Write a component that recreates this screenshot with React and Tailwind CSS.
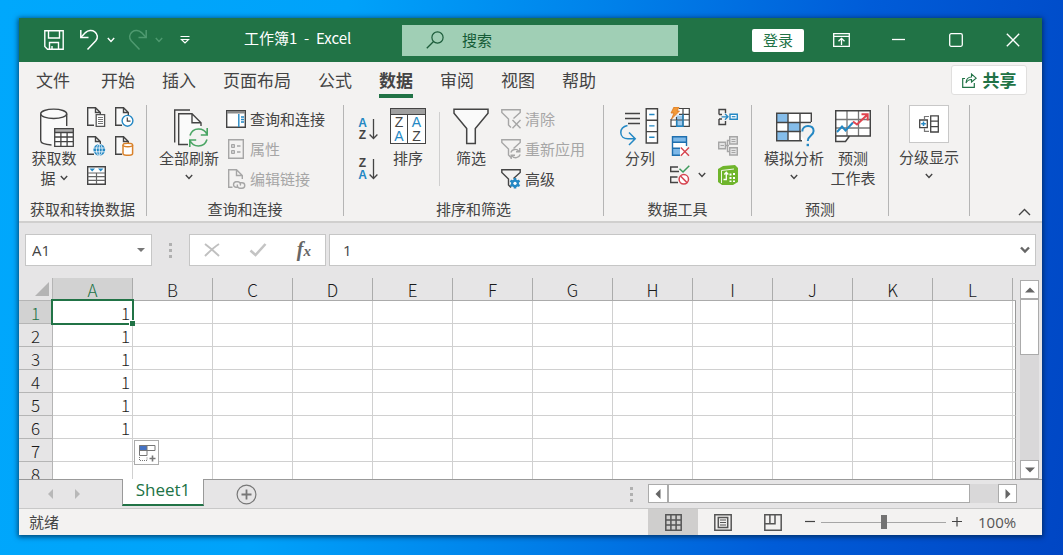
import { useState } from "react"

const tabs = ["文件", "开始", "插入", "页面布局", "公式", "数据", "审阅", "视图", "帮助"]
const columns = ["A", "B", "C", "D", "E", "F", "G", "H", "I", "J", "K", "L"]
const rows = [1, 2, 3, 4, 5, 6, 7, 8]
const initialCells = { A1: 1, A2: 1, A3: 1, A4: 1, A5: 1, A6: 1 }

const DARK = "#444"
const BLUE = "#2488c4"
const GRAY = "#a6a6a6"

const Svg = ({ w, h, children, className = "" }) => (
    <svg width={w} height={h} viewBox={`0 0 ${w} ${h}`} fill="none" className={`shrink-0 ${className}`} aria-hidden="true">
        {children}
    </svg>
)

const Chevron = ({ color = DARK, className }) => (
    <Svg w={8} h={6} className={className}>
        <path d="M.8 1L4 4.4L7.2 1" stroke={color} strokeWidth="1.4" />
    </Svg>
)

/* ---------- title bar icons ---------- */

const SaveIcon = () => (
    <Svg w={20} h={20}>
        <path d="M.8 .8H19.2V19.2H3.5L.8 16.5Z" stroke="#fff" strokeWidth="1.4" />
        <path d="M4.5 1V8H15.5V1M5.5 19V12.5H14.5V19M8 19V16" stroke="#fff" strokeWidth="1.4" />
    </Svg>
)

const UndoIcon = ({ color = "#fff", flip }) => (
    <Svg w={19} h={22} className={flip ? "-scale-x-100" : ""}>
        <path d="M.8 1V8.5H8.5" stroke={color} strokeWidth="1.5" />
        <path d="M1 8.2L5.5 3.6C8 1.2 12 .8 14.8 2.8C17.8 5 18.2 9 15.8 11.8L7.5 20.5" stroke={color} strokeWidth="1.5" />
    </Svg>
)

const CustomizeIcon = () => (
    <Svg w={10} h={10}>
        <path d="M.5 1.5H9.5M1.5 4.5L5 8L8.5 4.5Z" stroke="#fff" strokeWidth="1.2" />
    </Svg>
)

const SearchIcon = () => (
    <Svg w={18} h={18}>
        <circle cx="11.5" cy="6.5" r="5.6" stroke="#1c5c3a" strokeWidth="1.2" />
        <path d="M7.5 10.5L.8 17.2" stroke="#1c5c3a" strokeWidth="1.3" />
    </Svg>
)

const RibbonModeIcon = () => (
    <Svg w={17} h={14}>
        <path d="M.7 .7H16.3V13.3H.7ZM.7 3.4H16.3" stroke="#fff" strokeWidth="1.3" />
        <path d="M8.5 12V5.5M5.5 8.3L8.5 5.3L11.5 8.3" stroke="#fff" strokeWidth="1.3" />
    </Svg>
)

const ShareIcon = () => (
    <Svg w={15} h={15}>
        <path d="M3 5.5H.7V14.3H12.3V10" stroke="#217346" strokeWidth="1.2" />
        <path d="M4 10C4.2 6.5 6 4 9.5 4V1L14.2 5.2L9.5 9V6.5C7 6.5 5.2 7.6 4 10Z" stroke="#217346" strokeWidth="1.1" />
    </Svg>
)

/* ---------- ribbon icons ---------- */

const DatabaseIcon = () => (
    <Svg w={36} h={40}>
        <path d="M1.7 5.8V32.5C1.7 35 7 37 14 37H15V20H27.7V5.8" fill="#fafafa" />
        <path d="M1.7 5.8V32.5C1.7 34.8 6 36.6 12.5 37M27.7 5.8V18" stroke={DARK} strokeWidth="1.4" />
        <ellipse cx="14.7" cy="5.8" rx="13" ry="4.7" fill="#fafafa" stroke={DARK} strokeWidth="1.4" />
        <path d="M15.7 20.7H34.3V38.3H15.7Z" fill="#fff" />
        <path d="M15 20H35V24.5H15Z" fill="#b0b0b0" />
        <path d="M15.7 20.7H34.3V38.3H15.7ZM15.7 24.5H34.3M15.7 29H34.3M15.7 33.6H34.3M21.9 24.5V38M28.1 24.5V38" stroke={DARK} strokeWidth="1.3" />
    </Svg>
)

const Page = ({ color = DARK }) => (
    <>
        <path d="M.7 .7H8.5L13.3 5.5V18.3H.7Z" fill="#fafafa" />
        <path d="M7 18.3H.7V.7H8.5L13.3 5.5V8M8.5 .7V5.5H13.3" stroke={color} strokeWidth="1.4" />
    </>
)

const FromTextIcon = () => (
    <Svg w={19} h={20}>
        <Page />
        <path d="M9.2 7.7H17.6V19.3H9.2Z" fill="#fff" stroke="#555" strokeWidth="1.3" />
        <path d="M11 10.5H16M11 12.5H16M11 14.5H16M11 16.5H16" stroke="#777" />
    </Svg>
)

const RecentIcon = () => (
    <Svg w={19} h={20}>
        <Page />
        <circle cx="12.5" cy="13.8" r="5.4" fill="#fff" stroke={BLUE} strokeWidth="1.4" />
        <path d="M12.3 10.5V14.2H15.5" stroke={DARK} strokeWidth="1.2" />
    </Svg>
)

const WebIcon = () => (
    <Svg w={19} h={20}>
        <Page />
        <circle cx="12.3" cy="13.8" r="5.9" fill={BLUE} />
        <path d="M6.5 12H18M6.5 15.8H18M12.3 8V19.6" stroke="#fff" strokeWidth=".8" />
        <ellipse cx="12.3" cy="13.8" rx="2.9" ry="5.7" stroke="#fff" strokeWidth=".8" />
    </Svg>
)

const SourceIcon = () => (
    <Svg w={19} h={20}>
        <Page />
        <path d="M8 9V17.5C8 18.6 10 19.3 12.8 19.3C15.6 19.3 17.6 18.6 17.6 17.5V9" fill="#fff" stroke="#d9822b" strokeWidth="1.5" />
        <ellipse cx="12.8" cy="9" rx="4.8" ry="1.7" fill="#fff" stroke="#d9822b" strokeWidth="1.5" />
    </Svg>
)

const FromTableIcon = () => (
    <Svg w={19} h={19}>
        <path d="M.7 .7H18.3V18.3H.7Z" fill="#fff" stroke={DARK} strokeWidth="1.4" />
        <path d="M2.5 2.5H8L5.2 5.5ZM11 2.5H16.5L13.7 5.5Z" fill={BLUE} />
        <path d="M.7 7H18.3M.7 10.7H18.3M.7 14.4H18.3M9.5 7V18" stroke="#666" strokeWidth="1.2" />
    </Svg>
)

const RefreshAllIcon = () => (
    <Svg w={36} h={40}>
        <path d="M1.7 34.5V2H17" stroke={DARK} strokeWidth="1.4" />
        <path d="M5.7 5.7H19L28 14.7V20L16 36.5H5.7Z" fill="#fafafa" />
        <path d="M15 36.5H5.7V5.7H19L28 14.7V18M19 5.7V14.7H28" stroke={DARK} strokeWidth="1.4" />
        <circle cx="25.5" cy="29.5" r="10" fill="#f3f2f1" />
        <path d="M17 27.5C18.3 23.5 21.5 21 25.5 21C29.5 21 32.5 23 34 26.5M34.2 20V27H27.8M34 31.5C32.7 35.5 29.5 38 25.5 38C21.5 38 18.5 36 17 32.5M16.8 39V32H23.2" stroke="#4aa564" strokeWidth="1.6" />
    </Svg>
)

const QueriesIcon = () => (
    <Svg w={20} h={18}>
        <path d="M.7 .7H19.3V17.3H.7Z" fill="#fff" stroke={DARK} strokeWidth="1.4" />
        <path d="M1 1H19V3.5H1Z" fill="#8a8a8a" />
        <path d="M12.8 4V17" stroke={BLUE} strokeWidth="1.4" />
        <path d="M15 7H18M15 9.5H18M15 12H18" stroke={BLUE} strokeWidth="1.3" />
    </Svg>
)

const PropertiesIcon = () => (
    <Svg w={20} h={20}>
        <path d="M2.7 .7H17.3V19.3H2.7Z" stroke={GRAY} strokeWidth="1.4" />
        <path d="M5.5 5.5H8.5V8.5H5.5ZM5.5 11.5H8.5V14.5H5.5Z" fill="#ccc" stroke={GRAY} />
        <path d="M11 7H14.5M11 13H14.5" stroke={GRAY} strokeWidth="1.6" />
    </Svg>
)

const EditLinksIcon = () => (
    <Svg w={20} h={20}>
        <path d="M6.5 18.3H2.7V.7H10.5L16.3 6.5V10M10.5 .7V6.5H16.3" stroke={GRAY} strokeWidth="1.4" />
        <path d="M11.5 18.2H9.8A2.8 2.8 0 0 1 9.8 12.7H12A2.8 2.8 0 0 1 14.3 16.5M13.6 13.7H16A2.7 2.7 0 0 1 16 19.2H13.8A2.7 2.7 0 0 1 11.5 15.5" stroke={GRAY} strokeWidth="1.4" />
    </Svg>
)

const SortAzIcon = ({ first, second }) => (
    <span className="flex items-center gap-[2px] font-['Liberation_Sans',sans-serif] text-[12px] leading-3 font-bold text-[#444]">
        <span className="flex w-[9px] flex-col items-center">
            <span className={first === "A" ? "text-[#2488c4]" : ""}>{first}</span>
            <span className={second === "A" ? "text-[#2488c4]" : ""}>{second}</span>
        </span>
        <Svg w={9} h={22}>
            <path d="M4.5 1V20.5M.6 16.5L4.5 20.5L8.4 16.5" stroke={DARK} strokeWidth="1.3" />
        </Svg>
    </span>
)

const SortIcon = () => (
    <span className="flex size-9 flex-col border border-[#444] bg-white">
        <span className="h-[6px] border-b border-[#444] bg-[#a0a0a0]" />
        <span className="grid flex-1 grid-cols-2 text-center font-['Liberation_Sans',sans-serif] text-[14px] leading-[14px]">
            <span className="border-r border-[#444]">Z</span>
            <span className="text-[#2488c4]">A</span>
            <span className="border-r border-[#444] text-[#2488c4]">A</span>
            <span>Z</span>
        </span>
    </span>
)

const FilterIcon = () => (
    <Svg w={36} h={37}>
        <path d="M1 1.2H35V5.2L22.3 20.5V35.5H13.7V20.5L1 5.2Z" fill="#fafafa" stroke={DARK} strokeWidth="1.5" />
    </Svg>
)

const SmallFunnel = ({ color, children }) => (
    <Svg w={20} h={20}>
        <path d="M10 18.5L7.5 16V10L.8 3.5V.7H19.2V3.5L12.5 9.5" stroke={color} strokeWidth="1.4" />
        {children}
    </Svg>
)

const ClearIcon = () => (
    <SmallFunnel color={GRAY}>
        <path d="M11.5 11L19.5 19.3M19.5 11L11.5 19.3" stroke={GRAY} strokeWidth="1.4" />
    </SmallFunnel>
)

const ReapplyIcon = () => (
    <SmallFunnel color={GRAY}>
        <path d="M9.8 13.5A4.7 4.7 0 0 1 18 12.3M18.8 9V12.8H15M19.2 15.5A4.7 4.7 0 0 1 11 16.8M10.2 20V16.2H14" stroke={GRAY} strokeWidth="1.4" />
    </SmallFunnel>
)

const AdvancedIcon = () => (
    <SmallFunnel color={DARK}>
        <g stroke={BLUE} strokeWidth="2.6">
            <path d="M14 9V19.6M9.4 11.6L18.6 17M9.4 17L18.6 11.6" />
        </g>
        <circle cx="14" cy="14.3" r="3.9" fill={BLUE} />
        <circle cx="14" cy="14.3" r="1.6" fill="#fff" />
    </SmallFunnel>
)

const SplitIcon = () => (
    <Svg w={40} h={38}>
        <path d="M5 5.5H20M5 10.5H20M8 15.5H20" stroke={DARK} strokeWidth="1.3" />
        <path d="M7.5 17.5C3 18.5 .8 21 .8 24.5C.8 28.5 4 30.8 8 30.8H14.5M9 24.5L15.2 30.8L9 37" stroke={BLUE} strokeWidth="1.5" />
        <path d="M26.2 .8H37.5V35H26.2ZM26.2 12.2H37.5M26.2 23.6H37.5" fill="#fff" stroke={DARK} strokeWidth="1.4" />
        <path d="M29.2 6.5H34.5M29.2 17.9H34.5M29.2 29.3H34.5" stroke={BLUE} strokeWidth="1.4" />
    </Svg>
)

const FlashFillIcon = () => (
    <Svg w={20} h={20}>
        <path d="M9 1.5H19.3V19.3H1V12H9Z" fill="#fff" />
        <path d="M6.5 8.5H13V19H6.5Z" fill="#9cc9ec" />
        <path d="M9 1.5H19.3V19.3H1V12M1 13H19M6.5 10V19M13 2V19M9 7.3H19" stroke={DARK} strokeWidth="1.2" />
        <path d="M13 7.3V19.2H6.8V13" stroke={BLUE} strokeWidth="1.4" />
        <path d="M4 0H9L7 4H9.5L1.5 12L4 6H1Z" fill="#f29a38" stroke="#d9731a" strokeWidth=".8" />
    </Svg>
)

const RemoveDupIcon = () => (
    <Svg w={20} h={21}>
        <path d="M2.5 .7H16.5V19.3H2.5Z" fill="#fff" />
        <path d="M2.5 .7H16.5V6H2.5ZM2.5 12.5H10V19.3H2.5Z" fill="#7db8e8" />
        <path d="M10 19.3H2.5V.7H16.5V10M2.5 6.2H16.5M2.5 12.3H10" stroke="#1f6fae" strokeWidth="1.4" />
        <path d="M10.8 11.5L19 19.7M19 11.5L10.8 19.7" stroke="#d64550" strokeWidth="1.4" />
    </Svg>
)

const ValidationIcon = () => (
    <Svg w={20} h={20}>
        <path d="M8 2H.7V6.5H9M7.5 12H.7V17.5H8" stroke={DARK} strokeWidth="1.4" />
        <path d="M9.5 3.8L13 7L19.3 .7" stroke="#3d9a5b" strokeWidth="1.5" />
        <circle cx="13.8" cy="14.3" r="4.7" fill="#fff" stroke="#d64550" strokeWidth="1.5" />
        <path d="M10.5 11L17 17.6" stroke="#d64550" strokeWidth="1.5" />
    </Svg>
)

const ConsolidateIcon = () => (
    <Svg w={20} h={18}>
        <path d="M7.5 5V1.5H1V6.5M1 11V16.5H7.5V13M1 6.5H4M1 11H4" stroke={DARK} strokeWidth="1.4" />
        <path d="M3.5 8.8H9.5M7 5.8L10 8.8L7 11.8" stroke={BLUE} strokeWidth="1.3" />
        <path d="M12 6.2H19.3V11.2H12Z" fill="#fff" stroke={BLUE} strokeWidth="1.4" />
        <path d="M13.8 8.7H17.5" stroke={BLUE} strokeWidth="1.2" />
    </Svg>
)

const RelationsIcon = () => (
    <Svg w={20} h={20}>
        <path d="M7.5 9.5H11M11 4.5H9.5V15.5H11" stroke={GRAY} strokeWidth="1.4" />
        <path d="M.7 6.2H7.5V12.8H.7ZM11.7 .7H19.3V8H11.7ZM11.7 11.7H19.3V19H11.7Z" fill="#e4e4e4" stroke={GRAY} strokeWidth="1.4" />
        <path d="M2.5 9.5H6M13.5 3.5H17.5M13.5 5.5H17.5M13.5 14.5H17.5M13.5 16.5H17.5" stroke={GRAY} />
    </Svg>
)

const DataModelIcon = () => (
    <Svg w={20} h={20}>
        <path d="M0 4L5 1L17 0L20 3V17L15 20H4L0 17Z" fill="#6fb52c" />
        <path d="M3.5 18V5.5L16 4" stroke="#fff" strokeWidth=".9" />
        <path d="M8.3 7.5V14.5H5.5M6.3 9.5L8.3 7.2L10.3 9.5" stroke="#fff" strokeWidth="1.3" />
        <path d="M11.5 8.5H13.5V10.5H11.5ZM15 8H17V10H15ZM11.5 12H13.5V14H11.5ZM15 12H17V14H15ZM11.5 15.5H13.5V17H11.5ZM15 15.5H17V17H15Z" fill="#fff" />
    </Svg>
)

const WhatIfIcon = () => (
    <Svg w={36} h={36} className="overflow-visible">
        <path d="M.7 1.2H35.3V28.8H.7Z" fill="#fff" />
        <path d="M.7 1.2H12V10.5H.7ZM.7 19.5H12V28.8H.7ZM12 10.5H24V19.5H12Z" fill="#85bdea" />
        <path d="M35.3 10V1.2H.7V28.8H26M.7 10.5H35M.7 19.5H26M12 1.2V28.8M24 1.2V28.8" stroke={DARK} strokeWidth="1.4" />
        <path d="M25 12H40V36H28V27L25 24Z" fill="#f3f2f1" />
        <path d="M26.3 19.5C26.3 16 28.8 14 32 14C35.4 14 37.6 16 37.6 19C37.6 23.5 31.8 23.5 31.8 29" stroke={BLUE} strokeWidth="2" />
        <path d="M30.6 31.8H33V34.2H30.6Z" fill={BLUE} />
    </Svg>
)

const ForecastIcon = () => (
    <Svg w={36} h={34}>
        <path d="M.7 .8H35.3V26H14.5L10.5 31.5H.7Z" fill="#fff" />
        <path d="M12 1V26M23.5 1V26M1 9.5H35M1 18H35" stroke="#777" strokeWidth="1.3" />
        <path d="M.7 .8H35.3V26H14.5L10.5 31.5H.7ZM.7 26H14.5" stroke={DARK} strokeWidth="1.5" />
        <path d="M2 22L7 16.5L10.5 20.5L18 12.5" stroke={BLUE} strokeWidth="2" />
        <path d="M18 11.5L22 14.5L32 5M26.5 4.3H32.7V10.5" stroke="#e0444f" strokeWidth="2" />
    </Svg>
)

const OutlineIcon = () => (
    <Svg w={20} h={18}>
        <path d="M11.7 .8H19.3V17H11.7ZM11.7 6.2H19.3M11.7 11.6H19.3" stroke={DARK} strokeWidth="1.3" />
        <path d="M10 1.5H5.5V4M5.5 13.5V16.3H10" stroke="#777" strokeWidth="1.2" />
        <path d="M.7 5H8.3V12.6H.7Z" fill="#fff" stroke={DARK} strokeWidth="1.3" />
        <path d="M4.5 6.5V11.1M2.2 8.8H6.8" stroke={BLUE} strokeWidth="1.5" />
    </Svg>
)

const AutoFillIcon = () => (
    <Svg w={18} h={18}>
        <path d="M1.5 1.5H9V6.5H1.5Z" fill="#4472c4" />
        <path d="M1.5 1.5H17V6.5H1.5ZM9 1.5V11.5H1.5V1.5" stroke="#777" />
        <path d="M1.5 13V16.5H9V13" stroke="#777" strokeDasharray="1 1" />
        <path d="M14.5 11.5V17.5M11.5 14.5H17.5" stroke="#777" strokeWidth="1.6" />
    </Svg>
)

/* ---------- ribbon building blocks ---------- */

const Group = ({ label, className, children }) => (
    <section className="flex h-[111px] shrink-0 flex-col justify-between border-r border-[#b5b5b5]">
        <div className={`flex items-start ${className}`}>{children}</div>
        {label && <h2 className="text-center leading-[14px]">{label}</h2>}
    </section>
)

const BigButton = ({ icon, className = "", children }) => (
    <button className={`flex shrink-0 flex-col items-center pt-[3px] leading-5 ${className}`}>
        <span className="flex h-10 items-start justify-center">{icon}</span>
        {children}
    </button>
)

const SmallButton = ({ icon, disabled, children }) => (
    <button disabled={disabled} className="flex h-6 items-center gap-1 whitespace-nowrap disabled:text-[#a6a6a6]">
        {icon}
        {children}
    </button>
)

const IconButton = ({ label, className = "", children }) => (
    <button aria-label={label} className={`flex h-6 items-center justify-center ${className}`}>{children}</button>
)

const Triangle = ({ d, color = "#666", size = 10 }) => (
    <svg width={size} height={size} viewBox="0 0 10 10" aria-hidden="true"><path d={d} fill={color} /></svg>
)

const Dots = ({ className = "" }) => (
    <div className={`flex flex-col gap-[3px] ${className}`}>
        <span className="size-[3px] bg-[#b0b0b0]" />
        <span className="size-[3px] bg-[#b0b0b0]" />
        <span className="size-[3px] bg-[#b0b0b0]" />
    </div>
)

const TitleBar = () => (
    <header className="flex h-11 shrink-0 items-center bg-[#217346] text-white">
        <button aria-label="保存" className="ml-[25px]"><SaveIcon /></button>
        <button aria-label="撤消" className="ml-4 flex items-center gap-2"><UndoIcon /><Chevron color="#fff" /></button>
        <button aria-label="恢复" disabled className="ml-[13px] flex items-center gap-2"><UndoIcon color="#4f9a70" flip /><Chevron color="#4f9a70" /></button>
        <button aria-label="自定义快速访问工具栏" className="ml-[17px]"><CustomizeIcon /></button>
        <h1 className="ml-[54px] w-[114px] whitespace-pre pb-1 text-[15px] leading-5">工作簿1  -  Excel</h1>
        <label className="ml-11 flex h-[31px] w-[276px] items-center gap-[18px] bg-[#a0cfb5] pl-6">
            <SearchIcon />
            <input type="search" aria-label="搜索" placeholder="搜索" className="min-w-0 flex-1 bg-transparent text-[#155c36] outline-none placeholder:text-[#155c36]" />
        </label>
        <div className="ml-auto flex items-center pr-[22px]">
            <button className="h-[23px] w-[52px] rounded-[2px] bg-white text-[15px] leading-5 text-[#217346]">登录</button>
            <button aria-label="功能区显示选项" className="ml-[29px]"><RibbonModeIcon /></button>
            <button aria-label="最小化" className="ml-[42px]"><Svg w={14} h={14}><path d="M0 6.5H13" stroke="#fff" strokeWidth="1.3" /></Svg></button>
            <button aria-label="最大化" className="ml-[43px]"><Svg w={14} h={14}><rect x=".7" y=".7" width="12.6" height="12.6" rx="1.5" stroke="#fff" strokeWidth="1.3" /></Svg></button>
            <button aria-label="关闭" className="ml-[43px]"><Svg w={14} h={14}><path d="M.8 .8L13.2 13.2M13.2 .8L.8 13.2" stroke="#fff" strokeWidth="1.3" /></Svg></button>
        </div>
    </header>
)

const Ribbon = () => (
    <div className="flex shrink-0 border-b-2 border-[#d0cfce] pt-[7px] pb-[5px] text-[#444]">
        <Group label="获取和转换数据" className="w-[127px] pl-2">
            <BigButton icon={<span className="pl-[6px]"><DatabaseIcon /></span>} className="w-[54px]">
                <span>获取数</span>
                <span className="flex items-center gap-1">据 <Chevron /></span>
            </BigButton>
            <div className="ml-[6px] grid grid-cols-2 gap-x-[9px] gap-y-[5px]">
                <IconButton label="从文本/CSV"><FromTextIcon /></IconButton>
                <IconButton label="最近使用的源"><RecentIcon /></IconButton>
                <IconButton label="自网站"><WebIcon /></IconButton>
                <IconButton label="现有连接"><SourceIcon /></IconButton>
                <IconButton label="来自表格/区域"><FromTableIcon /></IconButton>
            </div>
        </Group>
        <Group label="查询和连接" className="w-[196px] pl-3">
            <BigButton icon={<span className="pl-1"><RefreshAllIcon /></span>} className="w-[60px]">
                <span>全部刷新</span>
                <Chevron className="mt-[6px]" />
            </BigButton>
            <div className="ml-[7px] flex flex-col gap-[6px] pt-[2px]">
                <SmallButton icon={<QueriesIcon />}>查询和连接</SmallButton>
                <SmallButton icon={<PropertiesIcon />} disabled>属性</SmallButton>
                <SmallButton icon={<EditLinksIcon />} disabled>编辑链接</SmallButton>
            </div>
        </Group>
        <Group label="排序和筛选" className="w-[259px] pl-[14px]">
            <div className="flex flex-col gap-4 pt-3">
                <IconButton label="升序"><SortAzIcon first="A" second="Z" /></IconButton>
                <IconButton label="降序"><SortAzIcon first="Z" second="A" /></IconButton>
            </div>
            <BigButton icon={<SortIcon />} className="ml-3 w-9">排序</BigButton>
            <div className="mt-[7px] ml-[13px] h-[74px] w-px bg-[#cfcfcf]" />
            <BigButton icon={<FilterIcon />} className="ml-[13px] w-9">筛选</BigButton>
            <div className="ml-3 flex flex-col gap-[6px] pt-[2px]">
                <SmallButton icon={<ClearIcon />} disabled>清除</SmallButton>
                <SmallButton icon={<ReapplyIcon />} disabled>重新应用</SmallButton>
                <SmallButton icon={<AdvancedIcon />}>高级</SmallButton>
            </div>
        </Group>
        <Group label="数据工具" className="w-[147px] pl-4">
            <BigButton icon={<SplitIcon />} className="w-10">分列</BigButton>
            <div className="ml-[10px] flex flex-col gap-[5px]">
                <IconButton label="快速填充"><FlashFillIcon /></IconButton>
                <IconButton label="删除重复值"><RemoveDupIcon /></IconButton>
                <IconButton label="数据验证"><ValidationIcon /></IconButton>
            </div>
            <IconButton label="数据验证选项" className="mt-[58px] ml-2"><Chevron /></IconButton>
            <div className="ml-3 flex flex-col gap-[5px]">
                <IconButton label="合并计算"><ConsolidateIcon /></IconButton>
                <IconButton label="关系"><RelationsIcon /></IconButton>
                <IconButton label="管理数据模型"><DataModelIcon /></IconButton>
            </div>
        </Group>
        <Group label="预测" className="w-[136px] pl-3">
            <BigButton icon={<span className="pt-1"><WhatIfIcon /></span>} className="w-[60px]">
                <span>模拟分析</span>
                <Chevron className="mt-[6px]" />
            </BigButton>
            <BigButton icon={<span className="pt-[2px]"><ForecastIcon /></span>} className="ml-[6px] w-[46px]">
                <span>预测</span>
                <span>工作表</span>
            </BigButton>
        </Group>
        <Group className="w-[80px] pl-[10px]">
            <button className="flex w-[60px] flex-col items-center leading-5">
                <span className="mb-1 flex h-[38px] w-10 items-center justify-center border border-[#c8c8c8] bg-white"><OutlineIcon /></span>
                <span>分级显示</span>
                <Chevron className="mt-[6px]" />
            </button>
        </Group>
        <button aria-label="折叠功能区" className="mr-[11px] ml-auto self-end">
            <Svg w={13} h={8}><path d="M1 7L6.5 1.5L12 7" stroke={DARK} strokeWidth="1.4" /></Svg>
        </button>
    </div>
)

const FormulaBar = ({ value }) => (
    <div className="flex h-[55px] shrink-0 items-start pt-[11px] pr-[6px] pl-[6px] font-['Open_Sans','Noto_Sans_CJK_SC',sans-serif] text-[#444]">
        <div className="flex h-8 w-[127px] items-center border border-[#c6c6c6] bg-white pr-[5px] pl-[6px]">
            <input aria-label="名称框" defaultValue="A1" className="min-w-0 flex-1 text-[15px] outline-none" />
            <button aria-label="名称列表"><Triangle d="M1 3H9L5 7Z" color="#777" /></button>
        </div>
        <Dots className="mt-[9px] ml-[17px]" />
        <div className="ml-[17px] flex h-8 w-[137px] items-center justify-between border border-[#c6c6c6] bg-white px-[14px]">
            <button aria-label="取消"><Svg w={16} h={14}><path d="M1 1C5 4 11 9 15 13M15 1C10 4 5 9 1 13" stroke="#c0c0c0" strokeWidth="2" /></Svg></button>
            <button aria-label="输入"><Svg w={18} h={14}><path d="M1.5 7.5L6.5 12L16.5 1" stroke="#c4c4c4" strokeWidth="2.6" /></Svg></button>
            <button aria-label="插入函数" className="font-['Liberation_Serif',serif] text-[20px] leading-6 font-bold text-[#666] italic">f<span className="text-[15px]">x</span></button>
        </div>
        <div className="ml-[3px] flex h-8 flex-1 items-center border border-[#c6c6c6] bg-white pr-[5px] pl-[13px]">
            <input aria-label="编辑栏" defaultValue={value} className="min-w-0 flex-1 text-[15px] outline-none" />
            <button aria-label="展开编辑栏"><Svg w={10} h={8}><path d="M1 1.5L5 5.5L9 1.5" stroke="#666" strokeWidth="2.4" /></Svg></button>
        </div>
    </div>
)

const Sheet = ({ cells }) => (
    <div className="flex min-h-0 flex-1 pr-[3px]">
        <div className="relative min-w-0 flex-1 overflow-hidden">
            <table className="w-full table-fixed border-separate border-spacing-0 text-[17px] leading-[21px] font-light text-[#1a1a1a]">
                <thead>
                    <tr className="h-[23px]">
                        <th aria-label="全选" className="w-[34px] border-r border-b border-[#b5b5b5] p-0">
                            <svg width="14" height="14" viewBox="0 0 14 14" className="mr-[3px] ml-auto block" aria-hidden="true"><path d="M14 0V14H0Z" fill="#b4b4b4" /></svg>
                        </th>
                        {columns.map(column => (
                            <th
                                key={column}
                                scope="col"
                                className={`w-20 border-r border-b border-[#ababab] p-0 pt-px font-light ${column === "A" ? "bg-[#d2d2d2] text-[#217346]" : ""}`}
                            >
                                {column}
                            </th>
                        ))}
                        <td className="border-b border-[#ababab] p-0" />
                    </tr>
                </thead>
                <tbody>
                    {rows.map(row => (
                        <tr key={row} className="h-[23px]">
                            <th
                                scope="row"
                                className={`border-r border-b border-[#b5b5b5] p-0 pt-px font-light ${row === 1 ? "bg-[#d2d2d2] text-[#217346]" : ""}`}
                            >
                                {row}
                            </th>
                            {columns.map(column => (
                                <td key={column} className="relative border-r border-b border-[#d0d0d0] bg-white p-0 pt-px pr-[2px] text-right">
                                    {cells[column + row]}
                                    {column + row === "A1" && (
                                        <span className="absolute -inset-x-[2px] -inset-y-[2px] z-10 border-2 border-[#217346]">
                                            <span className="absolute -right-[3px] -bottom-[3px] size-[6px] border-t border-l border-white bg-[#217346]" />
                                        </span>
                                    )}
                                    {column + row === "B7" && (
                                        <button aria-label="自动填充选项" className="absolute top-px left-px z-10 flex size-[25px] items-center justify-center border border-[#ababab] bg-white">
                                            <AutoFillIcon />
                                        </button>
                                    )}
                                </td>
                            ))}
                            <td className="border-r border-b border-[#d0d0d0] border-r-[#999] bg-white p-0" />
                        </tr>
                    ))}
                </tbody>
            </table>
        </div>
        <div className="mt-[2px] ml-1 flex w-[19px] flex-col bg-[#d9d8d9]">
            <button aria-label="向上滚动" className="flex h-[19px] items-center justify-center border border-[#ababab] bg-white"><Triangle d="M0 7.5L5 2.5L10 7.5Z" /></button>
            <div className="h-[56px] border border-[#ababab] bg-white" />
            <button aria-label="向下滚动" className="mt-auto flex h-[19px] items-center justify-center border border-[#ababab] bg-white"><Triangle d="M0 2.5L5 7.5L10 2.5Z" /></button>
        </div>
    </div>
)

const SheetTabs = () => (
    <div className="flex h-[29px] shrink-0 border-t border-[#999] pr-[25px]">
        <div className="flex items-center gap-[18px] pl-[26px]">
            <button aria-label="上一个工作表" disabled className="flex"><Triangle d="M8 0V10L3 5Z" color="#b8b8b8" /></button>
            <button aria-label="下一个工作表" disabled className="flex"><Triangle d="M2 0V10L7 5Z" color="#b8b8b8" /></button>
        </div>
        <button className="-mt-px ml-[39px] h-[27px] w-[82px] border-x border-b-2 border-x-[#999] border-b-[#217346] bg-white pb-1 font-['Open_Sans',sans-serif] text-[17px] leading-5 text-[#217346]">Sheet1</button>
        <button aria-label="新工作表" className="ml-8">
            <Svg w={21} h={21}>
                <circle cx="10.5" cy="10.5" r="9.4" stroke="#777" strokeWidth="1.2" />
                <path d="M10.5 5.5V15.5M5.5 10.5H15.5" stroke="#777" strokeWidth="1.8" />
            </Svg>
        </button>
        <Dots className="mt-[7px] ml-auto" />
        <div className="mt-1 ml-[15px] flex h-[19px] w-[369px] bg-[#d9d8d9]">
            <button aria-label="向左滚动" className="flex w-5 items-center justify-center border border-[#ababab] bg-white"><Triangle d="M7.5 0V10L2.5 5Z" /></button>
            <div className="w-[302px] border border-[#ababab] bg-white" />
            <button aria-label="向右滚动" className="ml-auto flex w-[19px] items-center justify-center border border-[#ababab] bg-white"><Triangle d="M2.5 0V10L7.5 5Z" /></button>
        </div>
    </div>
)

const StatusBar = () => {
    const [zoom, setZoom] = useState(100)

    return (
        <footer className="flex h-[27px] shrink-0 items-center border-t border-[#c8c8c8] bg-[#f3f2f1] pr-6 pl-[10px] text-[#444]">
            <span>就绪</span>
            <div className="ml-auto flex h-full">
                <button aria-label="普通" className="flex w-[50px] items-center justify-center bg-[#cfcecd]">
                    <Svg w={17} h={17}><path d="M.8 .8H16.2V16.2H.8ZM.8 5.9H16.2M.8 11.1H16.2M5.9 .8V16.2M11.1 .8V16.2" stroke="#555" strokeWidth="1.5" /></Svg>
                </button>
                <button aria-label="页面布局视图" className="flex w-[50px] items-center justify-center">
                    <Svg w={18} h={17}><path d="M.8 .8H17.2V16.2H.8ZM4.3 3.5H13.7V13.5H4.3Z" stroke="#555" strokeWidth="1.5" /><path d="M6 6H12M6 8.5H12M6 11H12" stroke="#555" /></Svg>
                </button>
                <button aria-label="分页预览" className="flex w-[50px] items-center justify-center">
                    <Svg w={18} h={17}><path d="M.8 .8H17.2V16.2H.8ZM.8 9.7H11V.8M5.9 .8V9.7" stroke="#555" strokeWidth="1.5" /></Svg>
                </button>
            </div>
            <button aria-label="缩小" className="ml-[7px]"><Svg w={10} h={10}><path d="M0 4.5H10" stroke="#444" strokeWidth="1.2" /></Svg></button>
            <input
                type="range"
                aria-label="显示比例"
                min="0"
                max="200"
                value={zoom}
                onChange={event => setZoom(Number(event.target.value))}
                className="mx-[6px] h-4 w-[125px] appearance-none bg-transparent [&::-webkit-slider-runnable-track]:h-px [&::-webkit-slider-runnable-track]:bg-[#a6a6a6] [&::-webkit-slider-thumb]:-mt-[7px] [&::-webkit-slider-thumb]:h-[14px] [&::-webkit-slider-thumb]:w-[6px] [&::-webkit-slider-thumb]:appearance-none [&::-webkit-slider-thumb]:bg-[#737373]"
            />
            <button aria-label="放大"><Svg w={10} h={10}><path d="M0 4.5H10M5 0V9.5" stroke="#444" strokeWidth="1.2" /></Svg></button>
            <span className="ml-4 w-10 font-['Open_Sans',sans-serif] text-[15px] text-[#555]">{zoom}%</span>
        </footer>
    )
}

const App = () => {
    const [activeTab, setActiveTab] = useState("数据")
    const [cells] = useState(initialCells)

    return (
        <div className="h-screen bg-[linear-gradient(100deg,#00a8fc_0%,#00a2fa_30%,#0082ea_52%,#005cd8_75%,#0046c4_100%)] pt-[18px] pr-[21px] pb-5 pl-[19px] font-['Noto_Sans_CJK_SC',sans-serif] text-[15px]">
            <div className="flex h-full flex-col bg-[#e6e5e6] shadow-[0_1px_5px_1px_rgba(0,30,60,0.7)]">
                <TitleBar />
                <div className="flex shrink-0 flex-col bg-[#f3f2f1]">
                    <nav className="flex h-9 items-center pr-[15px] pl-[17px] text-[17px] leading-6 text-[#444]">
                        <div className="flex h-full gap-[27px]">
                            {tabs.map(tab => (
                                <button
                                    key={tab}
                                    onClick={() => setActiveTab(tab)}
                                    className={`border-b-4 pt-[3px] first:mr-1 ${tab === activeTab ? "border-[#217346] font-bold" : "border-transparent"}`}
                                >
                                    {tab}
                                </button>
                            ))}
                        </div>
                        <button className="ml-auto flex h-[30px] w-[76px] items-center justify-center gap-[6px] rounded-[3px] border border-[#e0dfde] bg-white font-bold text-[#217346]">
                            <ShareIcon />
                            共享
                        </button>
                    </nav>
                    <Ribbon />
                </div>
                <FormulaBar value={cells.A1} />
                <Sheet cells={cells} />
                <SheetTabs />
                <StatusBar />
            </div>
        </div>
    )
}

export default App
